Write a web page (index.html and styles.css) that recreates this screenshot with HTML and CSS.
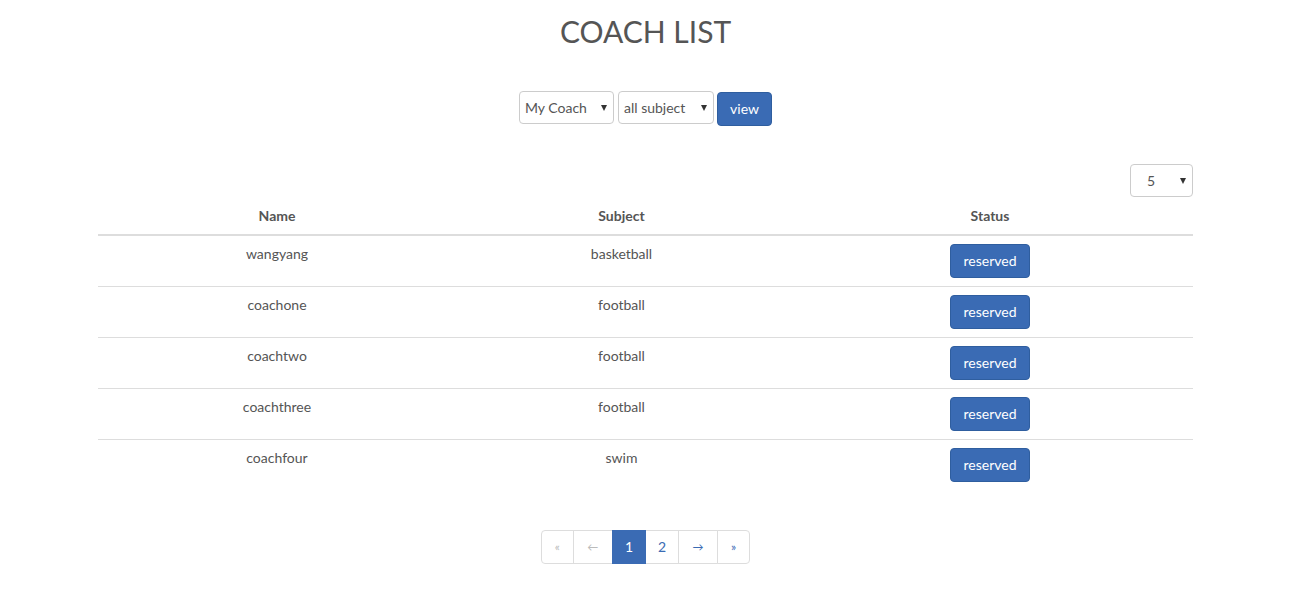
FILE: index.html
```html
<!DOCTYPE html>
<html lang="en">
<head>
<meta charset="utf-8">
<title>Coach List</title>
<link rel="stylesheet" href="styles.css">
</head>
<body>
<div class="page">
  <div class="container">
    <h2 class="title">COACH LIST</h2>
    <div class="filters">
      <div class="select sel-coach"><span>My Coach</span></div>
      <div class="select sel-subject"><span>all subject</span></div>
      <button class="btn btn-view">view</button>
    </div>
    <div class="toolbar">
      <div class="select sel-size"><span>5</span></div>
    </div>
    <table class="table">
      <colgroup>
        <col class="c-name">
        <col class="c-subject">
        <col class="c-status">
      </colgroup>
      <thead>
        <tr><th>Name</th><th>Subject</th><th>Status</th></tr>
      </thead>
      <tbody>
        <tr><td>wangyang</td><td>basketball</td><td><button class="btn">reserved</button></td></tr>
        <tr><td>coachone</td><td>football</td><td><button class="btn">reserved</button></td></tr>
        <tr><td>coachtwo</td><td>football</td><td><button class="btn">reserved</button></td></tr>
        <tr><td>coachthree</td><td>football</td><td><button class="btn">reserved</button></td></tr>
        <tr><td>coachfour</td><td>swim</td><td><button class="btn">reserved</button></td></tr>
      </tbody>
    </table>
    <div class="pager">
      <ul class="pagination">
        <li class="disabled edge"><span>&laquo;</span></li>
        <li class="disabled arrow"><span>&larr;</span></li>
        <li class="active"><span>1</span></li>
        <li><span>2</span></li>
        <li class="arrow"><span>&rarr;</span></li>
        <li class="edge"><span>&raquo;</span></li>
      </ul>
    </div>
  </div>
</div>
</body>
</html>
```

FILE: styles.css
```css
* { box-sizing: border-box; }
html, body { margin: 0; padding: 0; background: #fff; }
body {
  font-family: Lato, "Open Sans", "Liberation Sans", sans-serif;
  font-size: 14px;
  line-height: 20px;
  color: #555;
}
.page { padding-right: 10px; }
.container { width: 1095px; margin: 0 auto; }

.title {
  margin: 15px 0 0;
  font-size: 30px;
  line-height: 33px;
  font-weight: 400;
  text-align: center;
  color: #555;
}

.filters {
  display: flex;
  justify-content: center;
  align-items: flex-start;
  margin-top: 43px;
}
.select {
  position: relative;
  height: 33px;
  border: 1px solid #ccc;
  border-radius: 4px;
  background: #fff;
  padding: 6px 5px;
  font-size: 14px;
  line-height: 20px;
  color: #555;
}
.select::after {
  content: "";
  position: absolute;
  right: 6px;
  top: 13px;
  border-left: 3.5px solid transparent;
  border-right: 3.5px solid transparent;
  border-top: 6px solid #333;
}
.sel-coach { width: 95px; }
.sel-subject { width: 96px; margin-left: 4px; }

.btn {
  font-family: inherit;
  font-size: 14px;
  line-height: 20px;
  height: 34px;
  padding: 6px 12px;
  background: #3a6bb4;
  color: #fff;
  border: 1px solid #2f5e9f;
  border-radius: 4px;
  cursor: pointer;
}
.btn-view { width: 55px; margin-left: 3px; margin-top: 1px; padding: 6px 0; }

.toolbar {
  display: flex;
  justify-content: flex-end;
  margin-top: 38px;
  margin-bottom: 1px;
}
.sel-size { width: 63px; padding-left: 16px; }

.table {
  width: 100%;
  border-collapse: collapse;
  table-layout: fixed;
}
.c-name { width: 358px; }
.c-subject { width: 331px; }
.c-status { width: 406px; }
.table th, .table td {
  text-align: center;
  vertical-align: top;
  padding: 8px;
  line-height: 20px;
}
.table th {
  font-weight: 700;
  border-bottom: 2px solid #ddd;
}
.table tbody tr + tr td { border-top: 1px solid #ddd; }
.table td .btn { width: 80px; padding: 6px 0; }

.pager {
  display: flex;
  justify-content: center;
  margin-top: 40px;
}
.pagination {
  display: flex;
  list-style: none;
  margin: 0;
  padding: 0;
}
.pagination li span {
  display: block;
  height: 34px;
  padding: 6px 12px;
  line-height: 20px;
  border: 1px solid #ddd;
  margin-left: -1px;
  color: #3a6bb4;
  background: #fff;
}
.pagination li:first-child span {
  margin-left: 0;
  border-radius: 4px 0 0 4px;
}
.pagination li:last-child span { border-radius: 0 4px 4px 0; }
.pagination li.edge span { width: 33px; text-align: center; padding: 6px 0; font-size: 12px; }
.pagination li.arrow span { width: 40px; text-align: center; padding: 6px 0; font-size: 11px; }
.pagination li.disabled span { color: #bbb; }
.pagination li.active span {
  background: #3a6bb4;
  border-color: #3a6bb4;
  color: #fff;
  position: relative;
}
```
